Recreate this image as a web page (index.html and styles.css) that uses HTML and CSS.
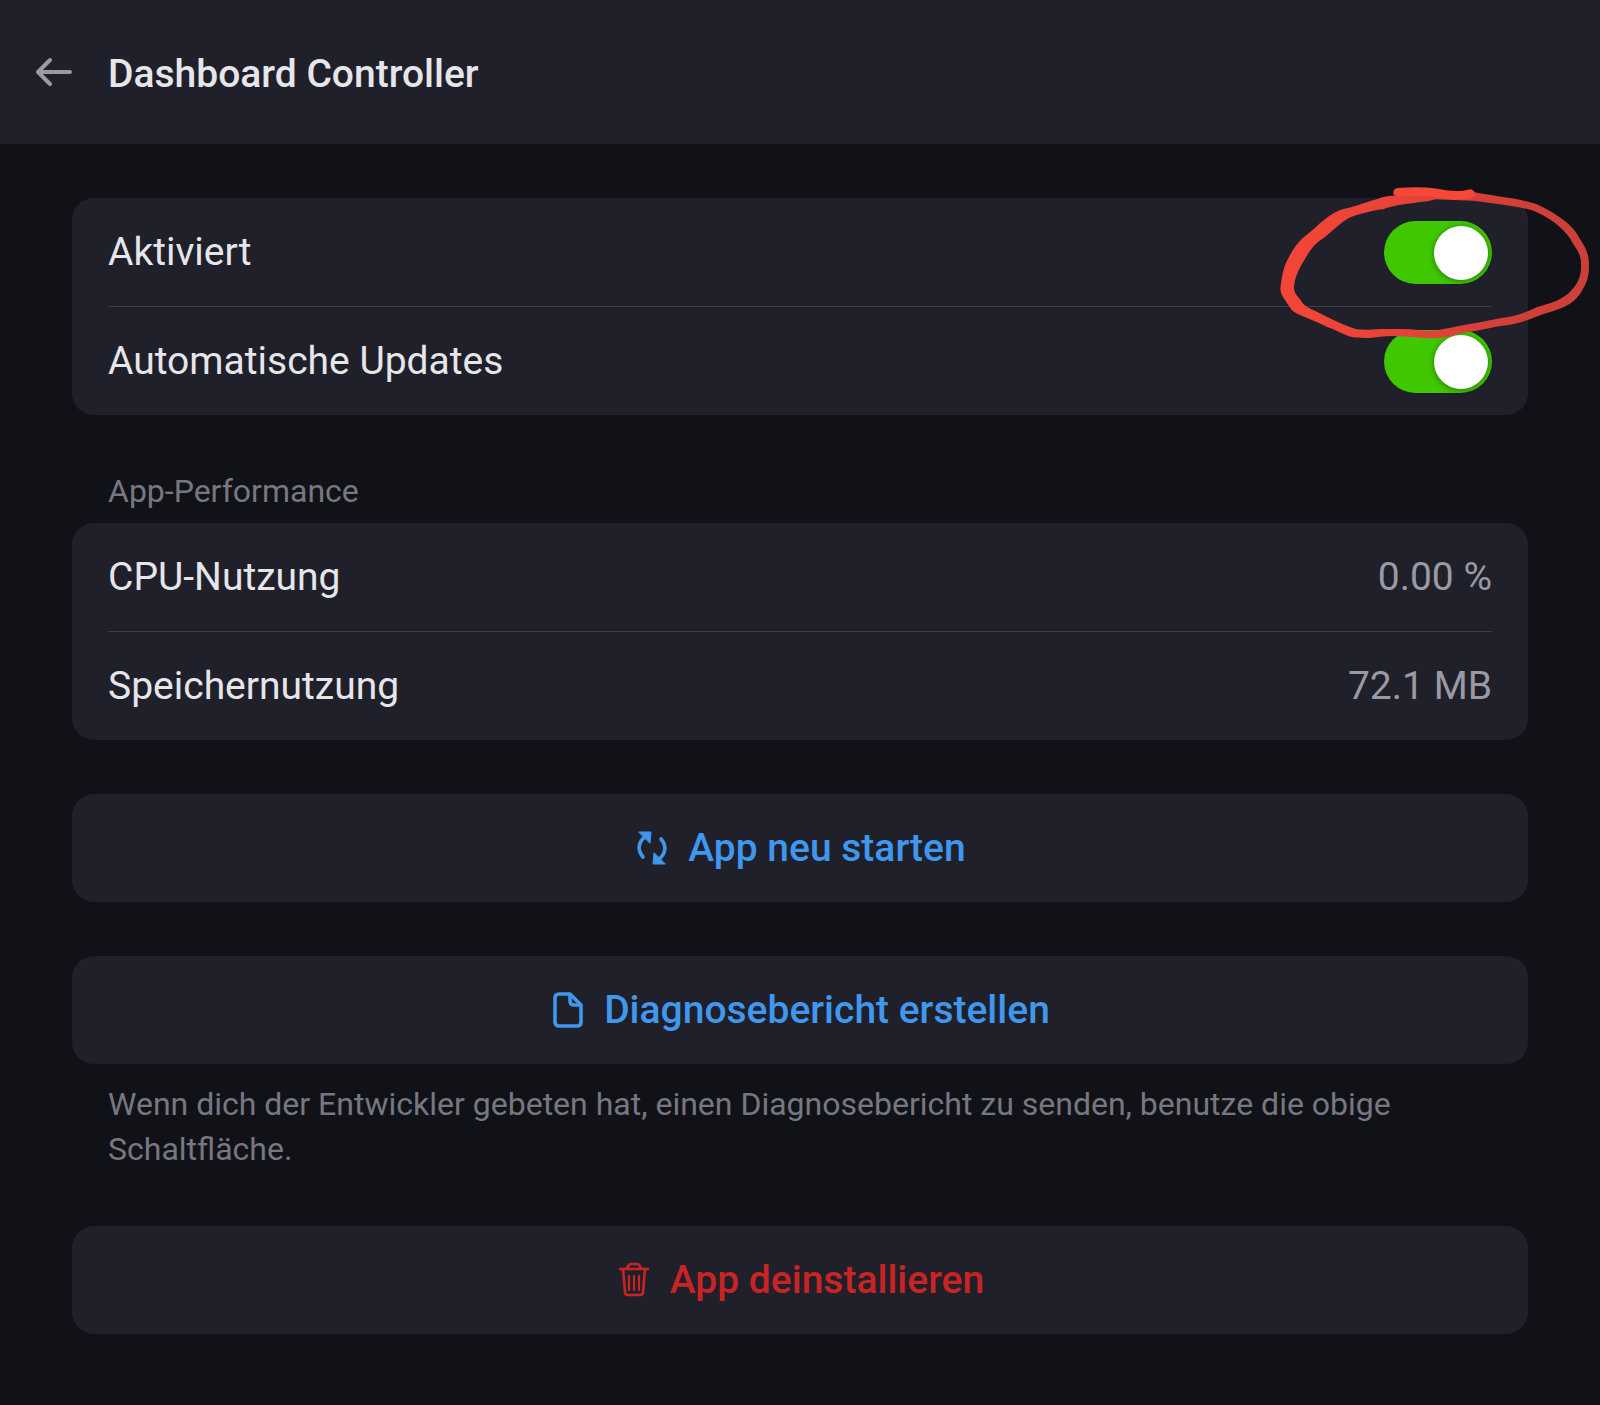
FILE: index.html
```html
<!DOCTYPE html>
<html lang="de">
<head>
    <meta charset="UTF-8">
    <meta name="viewport" content="width=device-width, initial-scale=1.0">
    <title>Dashboard Controller</title>
    <link rel="stylesheet" href="styles.css">
</head>
<body>

<header class="header">
    <button class="back" type="button" aria-label="Zurück">
        <svg class="icon" viewBox="0 0 36 36" fill="none" stroke="currentColor" stroke-width="4" stroke-linecap="round" stroke-linejoin="round">
            <path d="M34 18H2M14 6L2 18l12 12"/>
        </svg>
    </button>
    <h1>Dashboard Controller</h1>
</header>

<main class="content">
    <section class="card marked">
        <div class="row">
            <label for="enabled">Aktiviert</label>
            <input class="toggle" type="checkbox" id="enabled" checked>
        </div>
        <div class="row">
            <label for="updates">Automatische Updates</label>
            <input class="toggle" type="checkbox" id="updates" checked>
        </div>
        <!-- Hand-drawn ring around the first switch -->
        <svg class="ring" viewBox="0 0 1020 780" aria-hidden="true">
            <defs>
                <linearGradient id="ink" x1="0" y1="0" x2="1" y2="0">
                    <stop offset="0" stop-color="#f44637"/>
                    <stop offset="0.3" stop-color="#ea4438"/>
                    <stop offset="0.7" stop-color="#d34038"/>
                    <stop offset="1" stop-color="#cc3f38"/>
                </linearGradient>
            </defs>
            <path fill="url(#ink)" fill-rule="evenodd" d="M640 66C700 78 780 85 830 103C880 125 930 160 950 190C965 218 983 235 986 270C989 310 985 335 960 372C935 405 910 415 850 432C800 452 770 462 740 466C690 472 650 485 600 490C560 505 520 506 490 504C440 500 400 495 360 500C330 505 300 504 280 502C250 495 235 482 200 470C150 445 110 435 95 420C80 395 62 380 61 355C65 325 70 290 85 265C105 225 125 205 150 187C190 150 220 125 250 117C290 110 320 95 350 88C375 78 390 78 410 76Z
                M640 92C720 102 790 112 820 122C870 142 910 175 930 205C945 235 962 245 963 280C966 320 950 345 935 360C910 390 870 400 830 412C790 432 760 440 720 445C680 452 640 462 600 467C560 475 530 482 500 483C450 475 400 478 360 477C330 480 310 480 290 478C260 468 230 455 200 440C170 425 140 412 130 402C115 380 100 370 102 350C105 320 115 300 130 275C150 240 165 220 190 205C220 180 250 150 275 140C310 130 340 120 370 118C400 105 440 102 460 99C490 95 510 95 525 88Z"/>
            <path fill="none" stroke="#f64737" stroke-width="26" stroke-linecap="round" stroke-linejoin="round" d="M413 67Q480 62 530 69Q590 82 631 71"/>
        </svg>
    </section>

    <section class="group">
        <h2>App-Performance</h2>
        <div class="card">
            <div class="row">
                <span>CPU-Nutzung</span>
                <span class="value">0.00 %</span>
            </div>
            <div class="row">
                <span>Speichernutzung</span>
                <span class="value">72.1 MB</span>
            </div>
        </div>
    </section>

    <button class="card action" type="button">
        <svg class="icon" viewBox="0 0 36 36" fill="none" stroke="currentColor" stroke-width="3.6" stroke-linecap="round" aria-hidden="true">
            <path d="M9 27C3 20 4 12 12 6M27 9C33 16 32 24 24 30"/>
            <path d="M5 2h12l-1 11zM31 34H19l1-11z" fill="currentColor" stroke-width="1" stroke-linejoin="round"/>
        </svg>
        App neu starten
    </button>

    <section class="group">
        <button class="card action" type="button">
            <svg class="icon" viewBox="0 0 36 36" fill="none" stroke="currentColor" stroke-width="3.6" stroke-linejoin="round" aria-hidden="true">
                <path d="M9 2h11l11 11v17q0 4-4 4H9q-4 0-4-4V6q0-4 4-4z"/>
                <path d="M20 2v7q0 4 4 4h7"/>
            </svg>
            Diagnosebericht erstellen
        </button>
        <p>Wenn dich der Entwickler gebeten hat, einen Diagnosebericht zu senden, benutze die obige Schaltfläche.</p>
    </section>

    <button class="card action danger" type="button">
        <svg class="icon" viewBox="0 0 36 36" fill="none" stroke="currentColor" stroke-width="2.6" stroke-linecap="round" stroke-linejoin="round" aria-hidden="true">
            <path d="M4 7h28M10 7l3-4q1-1 2-1h6q1 0 2 1l3 4M7 7l2 23q0 3 3 3h12q3 0 3-3L29 7"/>
            <path d="M13 14v14M18 14v14M23 14v14" stroke-width="2.2"/>
        </svg>
        App deinstallieren
    </button>
</main>

</body>
</html>
```

FILE: styles.css
```css
* {
    box-sizing: border-box;
}

body {
    margin: 0;
    background-color: #111217;
    color: #e6e6ea;
    font-family: Roboto, sans-serif;
    font-size: 39px;
    line-height: 54px;
    overflow-x: hidden;
}

h1, h2, p {
    margin: 0;
}

button {
    border: none;
    font: inherit;
    cursor: pointer;
}

.header {
    display: flex;
    align-items: center;
    gap: 36px;
    padding: 43px 36px;
    background-color: #20202a;
}

.header h1 {
    padding-top: 4px;
    font-size: 39px;
    font-weight: 500;
}

.back {
    display: flex;
    padding: 0;
    background: none;
    color: #9a9aa5;
}

.icon {
    width: 36px;
    height: 36px;
    flex-shrink: 0;
}

.content {
    display: flex;
    flex-direction: column;
    gap: 54px;
    padding: 54px 72px;
}

.card {
    width: 100%;
    padding: 0 36px;
    border-radius: 22px;
    background-color: #20202a;
}

.row {
    display: flex;
    align-items: center;
    justify-content: space-between;
    min-height: 108px;
}

.row + .row {
    border-top: 1px solid #3d3d46;
    min-height: 109px;
}

.value {
    color: #9a9aa5;
}

.toggle {
    appearance: none;
    display: flex;
    align-items: center;
    width: 108px;
    height: 63px;
    margin: 0;
    padding: 5px 4px 4px;
    border-radius: 32px;
    background-color: #55555f;
    cursor: pointer;
}

.toggle::before {
    content: "";
    width: 54px;
    height: 54px;
    border-radius: 50%;
    background-color: #fff;
    box-shadow: 0 1px 6px rgba(0, 0, 0, 0.4);
}

.toggle:checked {
    justify-content: flex-end;
    background-color: #3fc700;
}

.marked {
    position: relative;
}

.ring {
    position: absolute;
    top: -28px;
    right: -72px;
    width: 340px;
    height: 260px;
    pointer-events: none;
}

.group h2,
.group p {
    padding: 0 36px;
    color: #777781;
    font-size: 32px;
    font-weight: 400;
    line-height: 45px;
}

.group h2 {
    margin-bottom: 9px;
}

.group p {
    margin-top: 18px;
}

.action {
    display: flex;
    align-items: center;
    justify-content: center;
    gap: 18px;
    min-height: 108px;
    color: #3f97ee;
    font-weight: 500;
}

.danger {
    color: #c92424;
}
```
